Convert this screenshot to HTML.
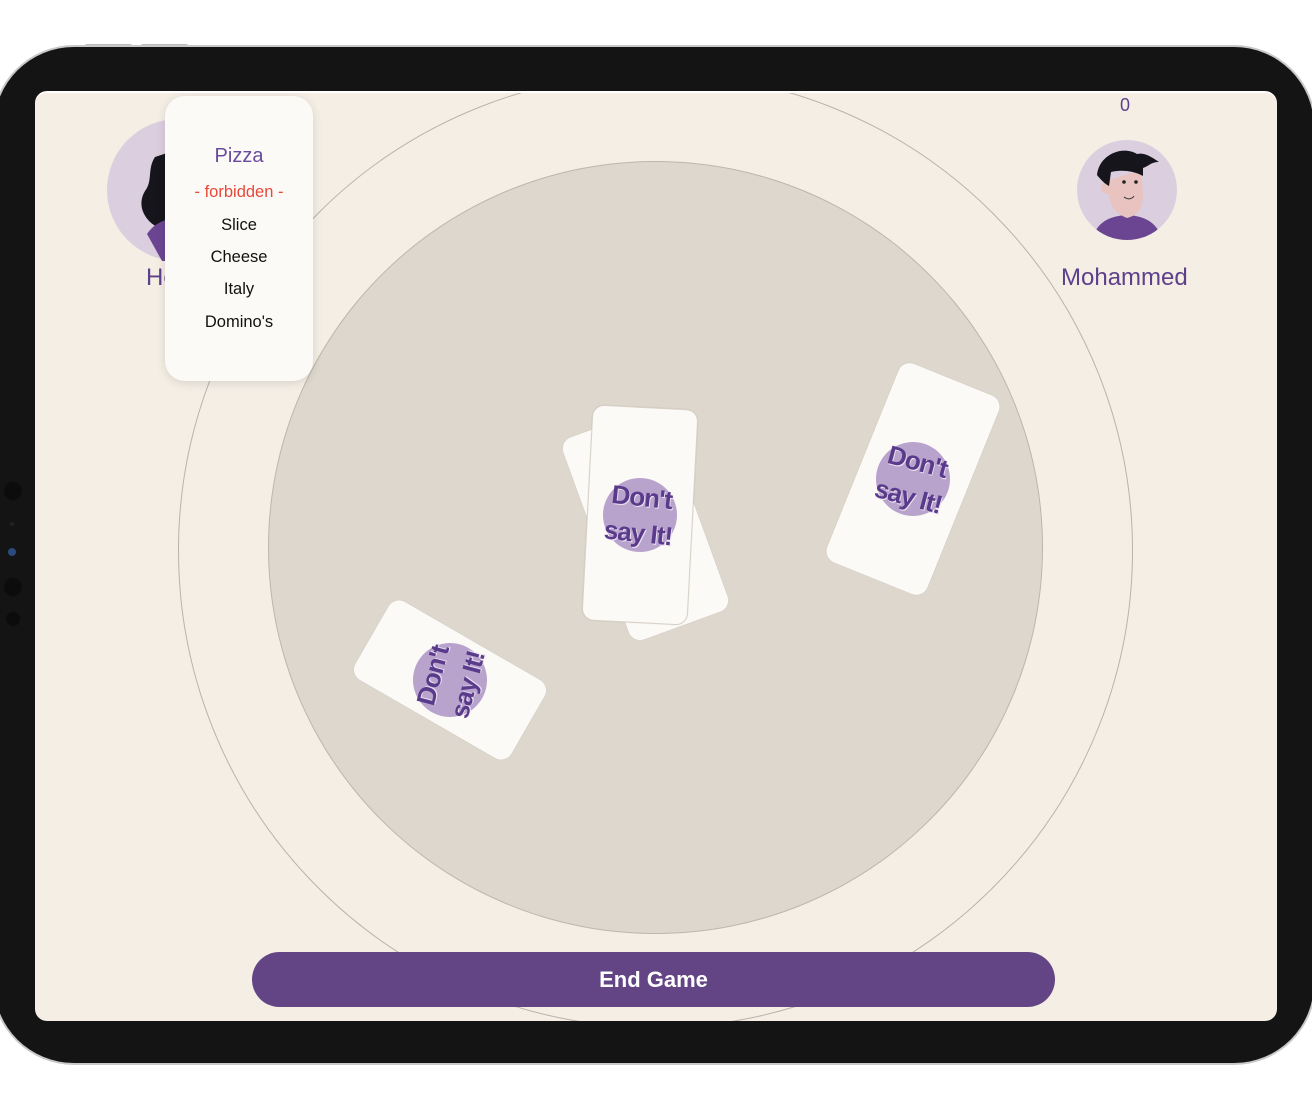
<!DOCTYPE html>
<html><head><meta charset="utf-8"><style>
*{margin:0;padding:0;box-sizing:border-box}
body{width:1312px;height:1112px;background:#fff;position:relative;overflow:hidden;font-family:"Liberation Sans",sans-serif}
.btn{position:absolute;top:44px;height:4px;border:1px solid #bbb;border-bottom:none;border-radius:2px 2px 0 0;background:#ddd}
.frame{position:absolute;left:-6px;top:47px;width:1320px;height:1016px;border-radius:80px;background:#141414;box-shadow:0 0 0 2px #c8c8c8}
.screen{position:absolute;left:35px;top:91px;width:1242px;height:930px;border-radius:12px;background:#f4eee5;overflow:hidden;border-top:2px solid #fff}
.ring{position:absolute;left:143px;top:-20px;width:955px;height:955px;border-radius:50%;border:1px solid #b9b3aa}
.disc{position:absolute;left:233px;top:68px;width:775px;height:773px;border-radius:50%;background:#ddd7cd;border:1px solid #bdb6ac}
.card{position:absolute;background:#fcfaf6;border-radius:12px;box-shadow:0 0 1px rgba(0,0,0,.15)}
.logo{position:absolute;left:50%;top:50%;width:74px;height:74px;margin:-37px 0 0 -37px;border-radius:50%;background:#b8a3cd;display:flex;flex-direction:column;align-items:center;justify-content:center;color:#5a3a8a;font-weight:bold;font-size:26px;line-height:36px;letter-spacing:-1px;text-shadow:1px 1px 0 #e8dff0}
.tip{position:absolute;left:130px;top:3px;width:148px;height:285px;border-radius:20px;background:#fcfaf6;box-shadow:0 2px 10px rgba(0,0,0,.12);text-align:center}
.tip div{position:absolute;left:0;right:0}
.name{position:absolute;color:#5e3f8a;font-size:24px}
.end{position:absolute;left:217px;top:859px;width:803px;height:55px;border-radius:28px;background:#634585;color:#fff;font-weight:bold;font-size:22px;text-align:center;line-height:55px}
.dot{position:absolute;border-radius:50%;background:#0c0c0c}
</style></head><body>
<div class="btn" style="left:85px;width:47px"></div>
<div class="btn" style="left:141px;width:47px"></div>
<div class="frame"></div>
<div class="dot" style="left:4px;top:482px;width:18px;height:18px"></div>
<div class="dot" style="left:10px;top:522px;width:4px;height:4px;background:#222"></div>
<div class="dot" style="left:8px;top:548px;width:8px;height:8px;background:#2a4a80"></div>
<div class="dot" style="left:4px;top:578px;width:18px;height:18px"></div>
<div class="dot" style="left:6px;top:612px;width:14px;height:14px"></div>
<div class="screen">
  <div class="ring"></div>
  <div class="disc"></div>
  <div class="card" style="left:558px;top:324px;width:105px;height:215px;transform:rotate(-20deg)"></div>
  <div class="card" style="left:552px;top:314px;width:106px;height:216px;transform:rotate(3deg);border:1px solid #d8d2c8">
    <div class="logo" style="transform:rotate(3deg)"><span>Don't</span><span>say It!</span></div>
  </div>
  <div class="card" style="left:824px;top:279px;width:108px;height:214px;transform:rotate(22deg)">
    <div class="logo" style="transform:rotate(-7deg)"><span>Don't</span><span>say It!</span></div>
  </div>
  <div class="card" style="left:370px;top:497px;width:90px;height:180px;transform:rotate(-60deg)">
    <div class="logo" style="transform:rotate(-15deg)"><span>Don't</span><span>say It!</span></div>
  </div>
  <svg style="position:absolute;left:72px;top:26px" width="142" height="142" viewBox="0 0 142 142">
    <circle cx="71" cy="71" r="71" fill="#dbcfdf"/>
    <path d="M48 38 C40 50 46 62 38 72 C30 85 36 100 50 108 L70 106 L72 30 Z" fill="#16151c"/>
    <path d="M40 115 C50 100 66 98 80 100 L80 142 L55 142 Z" fill="#6b4592"/>
  </svg>
  <div class="name" style="left:111px;top:171px">He</div>
  <div class="tip">
    <div style="top:49px;font-size:20px;color:#6a4a9c">Pizza</div>
    <div style="top:87px;font-size:16.5px;color:#e8483a">- forbidden -</div>
    <div style="top:120px;font-size:16.5px;color:#111">Slice</div>
    <div style="top:152px;font-size:16.5px;color:#111">Cheese</div>
    <div style="top:184px;font-size:16.5px;color:#111">Italy</div>
    <div style="top:217px;font-size:16.5px;color:#111">Domino's</div>
  </div>
  <div class="name" style="left:1085px;top:2px;font-size:18px">0</div>
  <svg style="position:absolute;left:1042px;top:47px" width="100" height="100" viewBox="0 0 100 100">
    <defs><clipPath id="c"><circle cx="50" cy="50" r="50"/></clipPath></defs>
    <circle cx="50" cy="50" r="50" fill="#dbcfdf"/>
    <g clip-path="url(#c)">
      <path d="M15 100 C20 80 35 76 50 75 C65 76 80 80 85 100 Z" fill="#6b4592"/>
      <path d="M32 40 C30 60 34 72 50 78 C62 75 66 68 66 52 L64 30 Z" fill="#e8c3c0"/>
      <circle cx="30" cy="48" r="6" fill="#e8c3c0"/>
      <path d="M20 35 C22 15 45 5 60 14 C68 12 76 18 82 22 C74 22 72 26 66 28 L66 36 C55 30 42 30 34 32 L32 46 C28 44 24 40 20 35 Z" fill="#16151c"/>
      <circle cx="47" cy="42" r="1.8" fill="#222"/><circle cx="59" cy="42" r="1.8" fill="#222"/>
      <path d="M47 57 C51 60 55 59 57 56" stroke="#333" fill="none" stroke-width="1"/>
    </g>
  </svg>
  <div class="name" style="left:1026px;top:171px">Mohammed</div>
  <div class="end">End Game</div>
</div>
</body></html>
